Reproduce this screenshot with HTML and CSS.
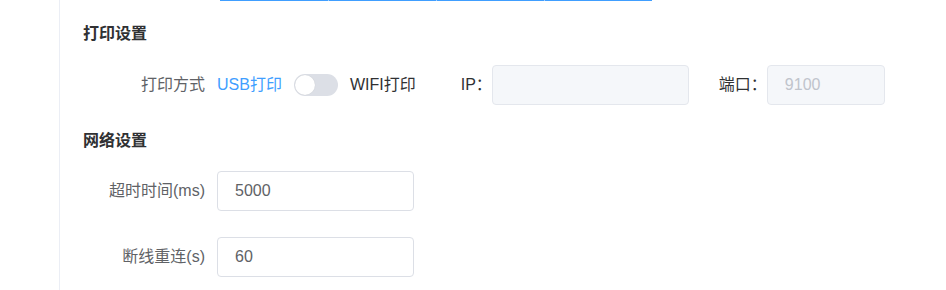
FILE: index.html
```html
<!DOCTYPE html>
<html lang="zh-CN">
<head>
    <meta charset="UTF-8">
    <meta name="viewport" content="width=device-width, initial-scale=1.0">
    <title>打印设置</title>
    <link rel="stylesheet" href="styles.css">
</head>
<body>
    <div class="panel">
        <div class="seg-bar">
            <span class="seg"></span>
            <span class="seg"></span>
            <span class="seg"></span>
            <span class="seg"></span>
        </div>

        <h3 class="section-title first">打印设置</h3>
        <div class="form-row print-row">
            <label class="form-label">打印方式</label>
            <div class="form-content">
                <span class="mode active">USB打印</span>
                <span class="switch"><span class="switch-knob"></span></span>
                <span class="mode">WIFI打印</span>

                <span class="inline-label ip-label">IP：</span>
                <input class="input disabled ip-input" type="text" disabled>

                <span class="inline-label port-label">端口：</span>
                <input class="input disabled port-input" type="text" placeholder="9100" disabled>
            </div>
        </div>

        <h3 class="section-title">网络设置</h3>
        <div class="form-row">
            <label class="form-label">超时时间(ms)</label>
            <div class="form-content">
                <input class="input" type="text" value="5000">
            </div>
        </div>
        <div class="form-row">
            <label class="form-label">断线重连(s)</label>
            <div class="form-content">
                <input class="input" type="text" value="60">
            </div>
        </div>
    </div>
</body>
</html>
```

FILE: styles.css
```css
* { box-sizing: border-box; }
body { margin: 0; background: #fff; font-family: "Liberation Sans", "Noto Sans CJK SC", sans-serif; font-size: 16px; color: #606266; }

.panel { margin-left: 59px; min-height: 100vh; border-left: 1px solid #ebeef5; padding-left: 23px; }

/* bottom edge of the tab group scrolled off the top */
.seg-bar { display: flex; margin-left: 137px; height: 1px; }
.seg { width: 108px; height: 1px; background: #409eff; }
.seg + .seg { border-left: 1px solid #a0cfff; }

.section-title { margin: 22px 0 18px; font-size: 16px; line-height: 24px; font-weight: bold; color: #303133; }
.section-title.first { margin: 21px 0 19px; }

.form-row { display: flex; align-items: center; height: 40px; margin-bottom: 26px; }
.form-row.print-row { margin-bottom: 24px; }
.form-label { width: 134px; padding-right: 12px; text-align: right; line-height: 40px; color: #606266; }
.form-content { display: flex; align-items: center; }

.mode { color: #303133; line-height: 40px; }
.mode.active { color: #409eff; }

.switch { position: relative; width: 44px; height: 22px; margin: 0 12px; border-radius: 11px; background: #dcdfe6; }
.switch-knob { position: absolute; top: 1px; left: 1px; width: 20px; height: 20px; border-radius: 50%; background: #fff; box-shadow: 0 0 1px rgba(0,0,0,0.15); }

.inline-label { color: #303133; line-height: 40px; }
.ip-label { margin-left: 45px; }
.port-label { margin-left: 30px; }

.input { width: 197px; height: 40px; padding: 0 17px; border: 1px solid #dcdfe6; border-radius: 4px; background: #fff; font: inherit; color: #606266; outline: none; }
.input::placeholder { color: #c0c4cc; }
.input.disabled { background: #f5f7fa; border-color: #e4e7ed; }
.port-input { width: 118px; }
```
